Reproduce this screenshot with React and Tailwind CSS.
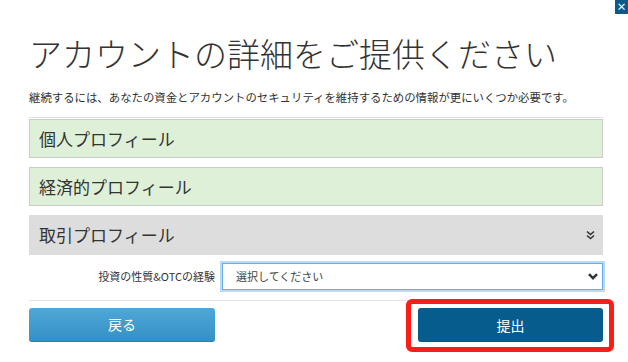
import React from "react";

const jp = { fontFamily: '"Noto Sans CJK JP", "Noto Sans", sans-serif' };

function DoubleChevron() {
  return (
    <svg width="9" height="10" viewBox="0 0 9 10" fill="none" stroke="#333" strokeWidth="1.6">
      <path d="M1 1.5 L4.5 4.5 L8 1.5" />
      <path d="M1 5.5 L4.5 8.5 L8 5.5" />
    </svg>
  );
}

function SelectChevron() {
  return (
    <svg width="10" height="7" viewBox="0 0 10 7" fill="none" stroke="#333" strokeWidth="2.4">
      <path d="M1 1.2 L5 5.2 L9 1.2" />
    </svg>
  );
}

function Section({ title, done, open }) {
  if (done) {
    return (
      <div className="h-[39px] border border-[#cccccc] bg-[#dff0d8] pl-[9px] flex items-center text-[17px] text-[#333]">
        {title}
      </div>
    );
  }
  return (
    <div className="h-[40px] bg-[#dddddd] pl-[10px] pr-[8px] flex items-center justify-between text-[17px] text-[#333]">
      <span>{title}</span>
      {open && <DoubleChevron />}
    </div>
  );
}

export default function App() {
  return (
    <div className="relative w-[628px] h-[362px] overflow-hidden bg-white pl-[29px] pr-[25px]" style={jp}>
      {/* close */}
      <div className="absolute top-0 right-0 w-[13px] h-[14px] bg-[#0b5a8a] text-white text-[10px] font-bold leading-[14px] text-center">
        ×
      </div>

      <h1 className="mt-[37px] text-[33px] leading-[33px] font-light text-[#333]">
        アカウントの詳細をご提供ください
      </h1>
      <p className="mt-[19px] text-[11.4px] leading-[16px] text-[#333]">
        継続するには、あなたの資金とアカウントのセキュリティを維持するための情報が更にいくつか必要です。
      </p>

      <div className="mt-[12px] border-t border-[#dddddd]" />

      <div className="mt-[1px] flex flex-col gap-[9px]">
        <Section title="個人プロフィール" done />
        <Section title="経済的プロフィール" done />
        <Section title="取引プロフィール" open />
      </div>

      <div className="mt-[8px] flex items-center">
        <div className="w-[193px] pr-[7px] text-right text-[11px] text-[#333]">投資の性質&amp;OTCの経験</div>
        <div className="flex-1 h-[27px] border border-[#66afe9] shadow-[0_0_0_2px_rgba(102,175,233,0.45)] bg-white flex items-center justify-between pl-[13px] pr-[4px] text-[11px] text-[#444]">
          <span>選択してください</span>
          <SelectChevron />
        </div>
      </div>

      <div className="mt-[10px] border-t border-[#e5e5e5]" />

      <div className="mt-[7px] flex justify-between">
        <button className="w-[186px] h-[34px] rounded-[3px] bg-gradient-to-b from-[#4ea7d7] to-[#3491c5] border-b border-[#2b7cad] text-white text-[14px]">
          戻る
        </button>
        <div className="relative">
          <button className="w-[185px] h-[34px] rounded-[3px] bg-[#075c8e] text-white text-[14px]">
            提出
          </button>
          <div className="absolute -left-[12px] -right-[11px] -top-[9px] -bottom-[10px] border-[5px] border-[#fe1c14] rounded-[6px] pointer-events-none" />
        </div>
      </div>
    </div>
  );
}
